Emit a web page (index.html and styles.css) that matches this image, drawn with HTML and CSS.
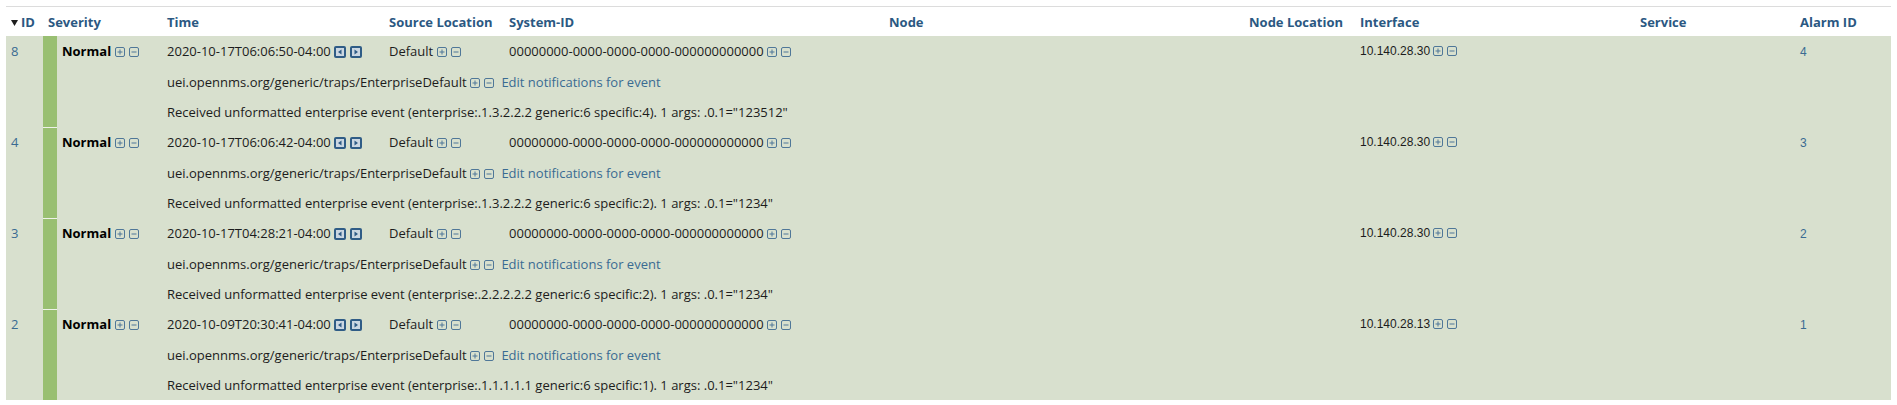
FILE: index.html
```html
<!DOCTYPE html>
<html>
<head>
<meta charset="utf-8">
<link rel="stylesheet" href="styles.css">
</head>
<body>
<svg width="0" height="0" class="defs">
  <defs>
    <symbol id="plus" viewBox="0 0 10 10"><rect x="0.5" y="0.5" width="9" height="9" rx="1.5" fill="none" stroke="currentColor"/><path d="M2.5 5H7.5M5 2.5V7.5" stroke="currentColor"/></symbol>
    <symbol id="minus" viewBox="0 0 10 10"><rect x="0.5" y="0.5" width="9" height="9" rx="1.5" fill="none" stroke="currentColor"/><path d="M2.5 5H7.5" stroke="currentColor"/></symbol>
    <symbol id="prev" viewBox="0 0 12 12"><rect x="0" y="0" width="12" height="12" rx="2" fill="#2f5c86"/><rect x="2" y="2" width="8" height="8" fill="#cbd7e2"/><path d="M7.5 3.5V8.5L4 6Z" fill="#2f5c86"/></symbol>
    <symbol id="next" viewBox="0 0 12 12"><rect x="0" y="0" width="12" height="12" rx="2" fill="#2f5c86"/><rect x="2" y="2" width="8" height="8" fill="#cbd7e2"/><path d="M4.5 3.5V8.5L8 6Z" fill="#2f5c86"/></symbol>
  </defs>
</svg>
<div class="wrap">
<table class="events">
  <colgroup>
    <col class="c-id"><col class="c-bar"><col class="c-sev"><col class="c-time"><col class="c-src"><col class="c-sys"><col class="c-node"><col class="c-nloc"><col class="c-if"><col class="c-svc"><col class="c-alarm">
  </colgroup>
  <thead>
    <tr>
      <th><svg class="sort" viewBox="0 0 7 6"><path d="M0 0H7L3.5 6Z"/></svg>ID</th>
      <th colspan="2">Severity</th>
      <th>Time</th>
      <th>Source Location</th>
      <th>System-ID</th>
      <th>Node</th>
      <th>Node Location</th>
      <th>Interface</th>
      <th>Service</th>
      <th>Alarm ID</th>
    </tr>
  </thead>
  <tbody>
    <tr>
      <td rowspan="3" class="id"><a>8</a></td>
      <td rowspan="3" class="bar first"></td>
      <td rowspan="3" class="sev"><b>Normal</b> <svg class="ic"><use href="#plus"/></svg><svg class="ic"><use href="#minus"/></svg></td>
      <td>2020-10-17T06:06:50-04:00 <svg class="ar"><use href="#prev"/></svg><svg class="ar"><use href="#next"/></svg></td>
      <td>Default <svg class="ic"><use href="#plus"/></svg><svg class="ic"><use href="#minus"/></svg></td>
      <td>00000000-0000-0000-0000-000000000000 <svg class="ic"><use href="#plus"/></svg><svg class="ic"><use href="#minus"/></svg></td>
      <td></td><td></td>
      <td class="iface">10.140.28.30 <svg class="ic"><use href="#plus"/></svg><svg class="ic"><use href="#minus"/></svg></td>
      <td></td>
      <td class="alarm"><a>4</a></td>
    </tr>
    <tr><td colspan="8">uei.opennms.org/generic/traps/EnterpriseDefault <svg class="ic"><use href="#plus"/></svg><svg class="ic"><use href="#minus"/></svg> <a>Edit notifications for event</a></td></tr>
    <tr><td colspan="8">Received unformatted enterprise event (enterprise:.1.3.2.2.2 generic:6 specific:4). 1 args: .0.1="123512"</td></tr>

    <tr>
      <td rowspan="3" class="id"><a>4</a></td>
      <td rowspan="3" class="bar"></td>
      <td rowspan="3" class="sev"><b>Normal</b> <svg class="ic"><use href="#plus"/></svg><svg class="ic"><use href="#minus"/></svg></td>
      <td>2020-10-17T06:06:42-04:00 <svg class="ar"><use href="#prev"/></svg><svg class="ar"><use href="#next"/></svg></td>
      <td>Default <svg class="ic"><use href="#plus"/></svg><svg class="ic"><use href="#minus"/></svg></td>
      <td>00000000-0000-0000-0000-000000000000 <svg class="ic"><use href="#plus"/></svg><svg class="ic"><use href="#minus"/></svg></td>
      <td></td><td></td>
      <td class="iface">10.140.28.30 <svg class="ic"><use href="#plus"/></svg><svg class="ic"><use href="#minus"/></svg></td>
      <td></td>
      <td class="alarm"><a>3</a></td>
    </tr>
    <tr><td colspan="8">uei.opennms.org/generic/traps/EnterpriseDefault <svg class="ic"><use href="#plus"/></svg><svg class="ic"><use href="#minus"/></svg> <a>Edit notifications for event</a></td></tr>
    <tr><td colspan="8">Received unformatted enterprise event (enterprise:.1.3.2.2.2 generic:6 specific:2). 1 args: .0.1="1234"</td></tr>

    <tr>
      <td rowspan="3" class="id"><a>3</a></td>
      <td rowspan="3" class="bar"></td>
      <td rowspan="3" class="sev"><b>Normal</b> <svg class="ic"><use href="#plus"/></svg><svg class="ic"><use href="#minus"/></svg></td>
      <td>2020-10-17T04:28:21-04:00 <svg class="ar"><use href="#prev"/></svg><svg class="ar"><use href="#next"/></svg></td>
      <td>Default <svg class="ic"><use href="#plus"/></svg><svg class="ic"><use href="#minus"/></svg></td>
      <td>00000000-0000-0000-0000-000000000000 <svg class="ic"><use href="#plus"/></svg><svg class="ic"><use href="#minus"/></svg></td>
      <td></td><td></td>
      <td class="iface">10.140.28.30 <svg class="ic"><use href="#plus"/></svg><svg class="ic"><use href="#minus"/></svg></td>
      <td></td>
      <td class="alarm"><a>2</a></td>
    </tr>
    <tr><td colspan="8">uei.opennms.org/generic/traps/EnterpriseDefault <svg class="ic"><use href="#plus"/></svg><svg class="ic"><use href="#minus"/></svg> <a>Edit notifications for event</a></td></tr>
    <tr><td colspan="8">Received unformatted enterprise event (enterprise:.2.2.2.2.2 generic:6 specific:2). 1 args: .0.1="1234"</td></tr>

    <tr>
      <td rowspan="3" class="id"><a>2</a></td>
      <td rowspan="3" class="bar"></td>
      <td rowspan="3" class="sev"><b>Normal</b> <svg class="ic"><use href="#plus"/></svg><svg class="ic"><use href="#minus"/></svg></td>
      <td>2020-10-09T20:30:41-04:00 <svg class="ar"><use href="#prev"/></svg><svg class="ar"><use href="#next"/></svg></td>
      <td>Default <svg class="ic"><use href="#plus"/></svg><svg class="ic"><use href="#minus"/></svg></td>
      <td>00000000-0000-0000-0000-000000000000 <svg class="ic"><use href="#plus"/></svg><svg class="ic"><use href="#minus"/></svg></td>
      <td></td><td></td>
      <td class="iface">10.140.28.13 <svg class="ic"><use href="#plus"/></svg><svg class="ic"><use href="#minus"/></svg></td>
      <td></td>
      <td class="alarm"><a>1</a></td>
    </tr>
    <tr><td colspan="8">uei.opennms.org/generic/traps/EnterpriseDefault <svg class="ic"><use href="#plus"/></svg><svg class="ic"><use href="#minus"/></svg> <a>Edit notifications for event</a></td></tr>
    <tr><td colspan="8">Received unformatted enterprise event (enterprise:.1.1.1.1.1 generic:6 specific:1). 1 args: .0.1="1234"</td></tr>
  </tbody>
</table>
</div>
</body>
</html>
```
FILE: styles.css
```css
html, body {
  margin: 0;
  background: #ffffff;
}
.defs {
  position: absolute;
  width: 0;
  height: 0;
}
.wrap {
  padding: 6px;
}
.events {
  width: 1885px;
  table-layout: fixed;
  border-collapse: collapse;
  font-family: "Open Sans", "Noto Sans", sans-serif;
  font-size: 13px;
  color: #1c1c1c;
}
.c-id { width: 37px; }
.c-bar { width: 14px; }
.c-sev { width: 105px; }
.c-time { width: 222px; }
.c-src { width: 120px; }
.c-sys { width: 380px; }
.c-node { width: 360px; }
.c-nloc { width: 111px; }
.c-if { width: 280px; }
.c-svc { width: 160px; }
.c-alarm { width: 96px; }

.events th {
  border-top: 1px solid #dcdcdc;
  height: 29px;
  padding: 0 5px;
  text-align: left;
  font-weight: 700;
  color: #2b5882;
  white-space: nowrap;
  vertical-align: middle;
}
.events th .sort {
  width: 7px;
  height: 6px;
  fill: #1e1e1e;
  margin-right: 3px;
  vertical-align: 1px;
}
.events tbody td {
  background: #d8e0ce;
  height: 30px;
  padding: 0 5px;
  line-height: 30px;
  white-space: nowrap;
  vertical-align: top;
}
.events tbody td.bar {
  background: #99bf72;
  padding: 0;
  border-top: 1px solid #eef2e9;
}
.events tbody td.bar.first {
  border-top: 0;
}
.events a {
  color: #3a6b92;
}
.events td.sev b {
  color: #000;
}
.ic {
  width: 10px;
  height: 10px;
  color: #4f7798;
  vertical-align: -1px;
  margin-right: 4px;
}
.ar {
  width: 12px;
  height: 12px;
  vertical-align: -2px;
  margin-right: 4px;
}
.iface {
  font-family: "Liberation Sans", sans-serif;
  font-size: 12px;
}
.alarm a {
  font-family: "Liberation Sans", sans-serif;
  font-size: 12px;
}
```
